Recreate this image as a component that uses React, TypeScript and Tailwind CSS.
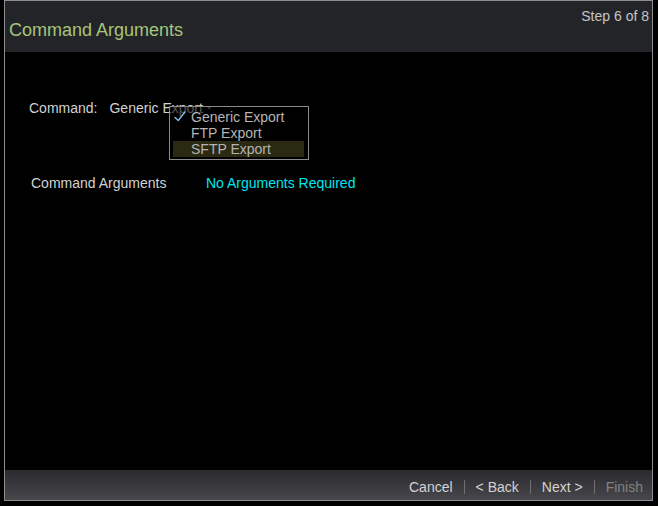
import React from 'react';

const font = { fontFamily: '"Liberation Sans", Arial, sans-serif' };

const options = ['Generic Export', 'FTP Export', 'SFTP Export'];

export default function App() {
  const selected = 'Generic Export';
  const hovered = 'SFTP Export';

  return (
    <div className="w-[658px] h-[506px] bg-black pl-[4px]" style={font}>
      <div className="w-[649px] h-[501px] border border-[#8e8e8e] flex flex-col">
        {/* Header */}
        <div className="h-[51px] bg-[#232428] flex justify-between pl-[4px] pr-[3px]">
          <div className="pt-[19px] text-[18px] leading-[20px] text-[#a5c57b]">Command Arguments</div>
          <div className="pt-[7px] text-[14px] leading-[16px] text-[#c4c4c4]">Step 6 of 8</div>
        </div>

        {/* Body */}
        <div className="flex-1 relative pl-[24px] pt-[48px] text-[14px] leading-[16px] text-[#d2d2d2]">
          <div className="flex items-center gap-[12px]">
            <span>Command:</span>
            <span className="flex items-center gap-[3px]">
              Generic Export
              <span className="text-[7px] text-[#8a8a8a]">▼</span>
            </span>
          </div>

          <div className="flex mt-[59px] pl-[2px]">
            <span className="w-[175px]">Command Arguments</span>
            <span className="text-[#00e6ef]">No Arguments Required</span>
          </div>

          {/* Dropdown menu */}
          <div className="absolute left-[164px] top-[54px] w-[140px] border border-[#8a8a8a] bg-black/60 py-[2px] pl-[3px] pr-[4px]">
            {options.map((opt) => (
              <div
                key={opt}
                className={`relative h-[16px] leading-[16px] pl-[18px] text-[#b4b4b4] ${opt === hovered ? 'bg-[#2a2a12]' : ''}`}
              >
                {opt === selected && (
                  <svg className="absolute left-[1px] top-[2px]" width="12" height="11" viewBox="0 0 12 11" fill="none">
                    <path d="M1 6.5 L4.2 9.5 L11 1" stroke="#7cb9ec" strokeWidth="1.4" strokeLinecap="round" strokeLinejoin="round" />
                  </svg>
                )}
                {opt}
              </div>
            ))}
          </div>
        </div>

        {/* Footer */}
        <div className="h-[30px] bg-gradient-to-b from-[#2b2b2f] to-[#48484c] flex justify-end items-start pt-[9px] pr-[9px] gap-[11px] text-[14px] leading-[16px] text-[#d2d2d2]">
          <span>Cancel</span>
          <div className="w-px h-[14px] mt-[1px] bg-[#707070]" />
          <span>&lt; Back</span>
          <div className="w-px h-[14px] mt-[1px] bg-[#707070]" />
          <span>Next &gt;</span>
          <div className="w-px h-[14px] mt-[1px] bg-[#707070]" />
          <span className="text-[#818181]">Finish</span>
        </div>
      </div>
    </div>
  );
}
